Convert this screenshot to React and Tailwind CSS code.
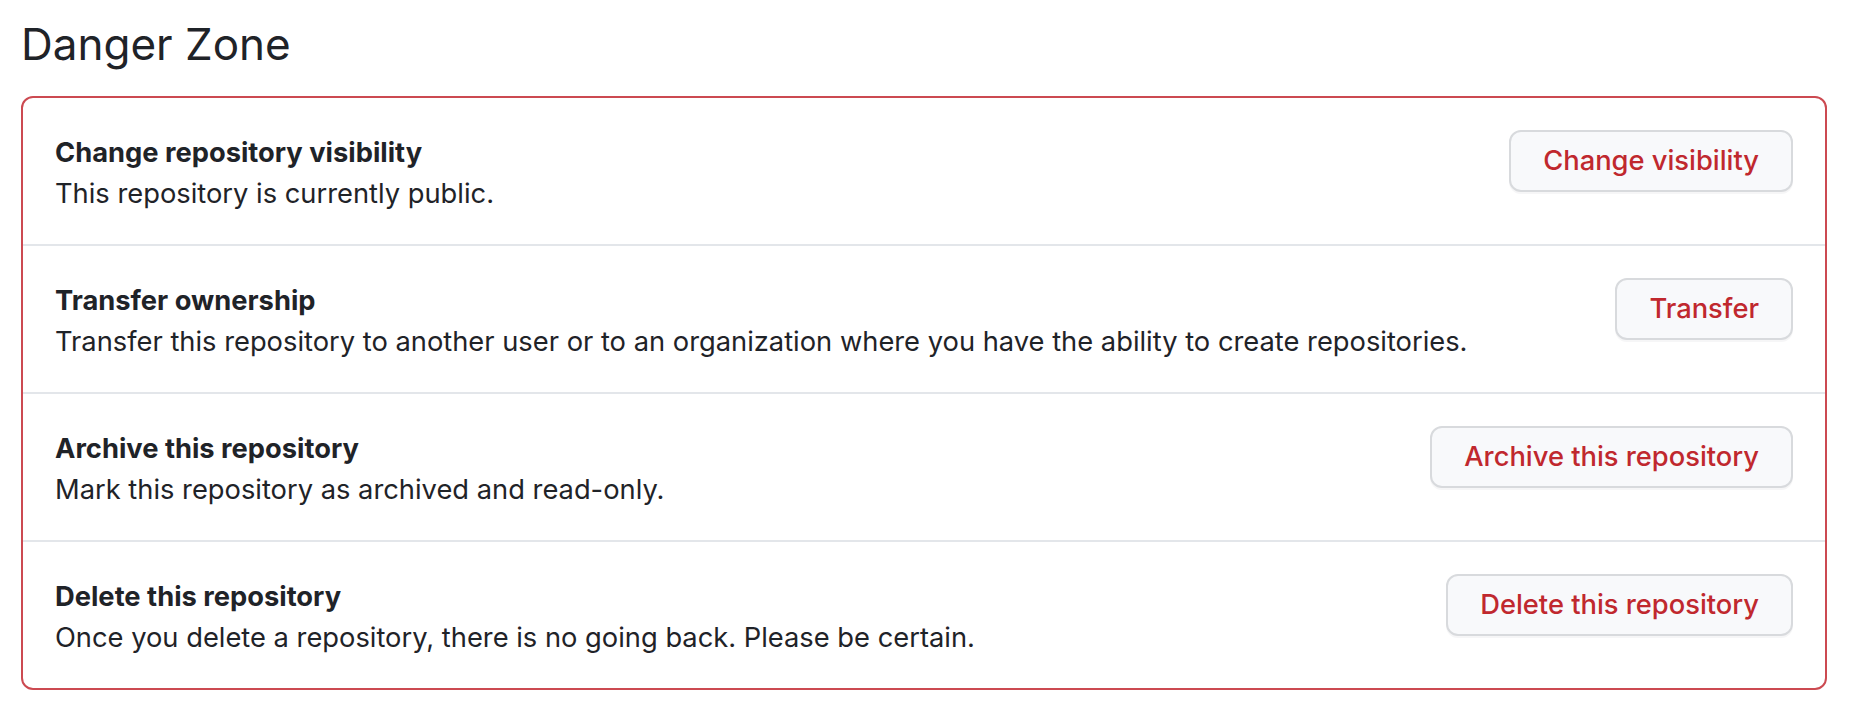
const rows = [
  {
    title: 'Change repository visibility',
    desc: 'This repository is currently public.',
    action: 'Change visibility',
  },
  {
    title: 'Transfer ownership',
    desc: 'Transfer this repository to another user or to an organization where you have the ability to create repositories.',
    action: 'Transfer',
  },
  {
    title: 'Archive this repository',
    desc: 'Mark this repository as archived and read-only.',
    action: 'Archive this repository',
  },
  {
    title: 'Delete this repository',
    desc: 'Once you delete a repository, there is no going back. Please be certain.',
    action: 'Delete this repository',
  },
]

function DangerRow({ title, desc, action, last }) {
  return (
    <div
      className={
        'flex items-start justify-between px-[32px] py-[32px] ' +
        (last ? '' : 'border-b-2 border-[#e3e6ea]')
      }
    >
      <div className="mt-[2px] -mb-[2px] text-[27.3px] leading-[41px] text-[#1f2328]">
        <div className="font-bold">{title}</div>
        <div>{desc}</div>
      </div>
      <button className="h-[62px] px-[32px] flex-shrink-0 rounded-[12px] border-2 border-[#d8dadd] bg-[#f8f9fb] text-[27.3px] font-medium text-[#c0282e] shadow-[0_2px_0_rgba(31,35,40,0.04)]">
        {action}
      </button>
    </div>
  )
}

export default function App() {
  return (
    <div
      className="min-h-screen bg-white pl-[21px] pr-[27px] pt-[14px]"
      style={{ fontFamily: 'Inter, "Noto Sans", sans-serif' }}
    >
      <h2 className="text-[44px] leading-[60px] font-normal text-[#1f2328] mb-[22px]">
        Danger Zone
      </h2>
      <div className="rounded-[12px] border-2 border-[#cc4a51]">
        {rows.map((r, i) => (
          <DangerRow key={r.title} {...r} last={i === rows.length - 1} />
        ))}
      </div>
    </div>
  )
}
